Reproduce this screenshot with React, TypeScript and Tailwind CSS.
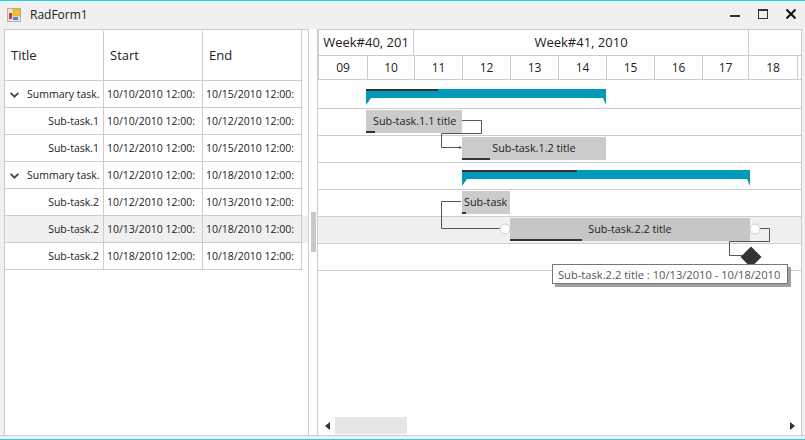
const line = "border-[#cccccc]";

interface TaskRow {
  title: string;
  start: string;
  end: string;
  summary?: boolean;
  selected?: boolean;
}

const rows: TaskRow[] = [
  { title: "Summary task.", start: "10/10/2010 12:00:", end: "10/15/2010 12:00:", summary: true },
  { title: "Sub-task.1", start: "10/10/2010 12:00:", end: "10/12/2010 12:00:" },
  { title: "Sub-task.1", start: "10/12/2010 12:00:", end: "10/15/2010 12:00:" },
  { title: "Summary task.", start: "10/12/2010 12:00:", end: "10/18/2010 12:00:", summary: true },
  { title: "Sub-task.2", start: "10/12/2010 12:00:", end: "10/13/2010 12:00:" },
  { title: "Sub-task.2", start: "10/13/2010 12:00:", end: "10/18/2010 12:00:", selected: true },
  { title: "Sub-task.2", start: "10/18/2010 12:00:", end: "10/18/2010 12:00:" },
];

const days = [
  { label: "09", width: 49 },
  { label: "10", width: 47 },
  { label: "11", width: 48 },
  { label: "12", width: 48 },
  { label: "13", width: 48 },
  { label: "14", width: 48 },
  { label: "15", width: 48 },
  { label: "16", width: 48 },
  { label: "17", width: 46 },
  { label: "18", width: 49 },
];

function FormIcon() {
  return (
    <svg width="14" height="14" viewBox="0 0 14 14">
      <rect x="0.5" y="0.5" width="13" height="13" fill="#e4e4e4" stroke="#b0b0b0" />
      <rect x="6" y="1" width="7" height="7" fill="#f5c02e" stroke="#c79a20" strokeWidth="0.5" />
      <rect x="2" y="5" width="3" height="6" fill="#d03a2a" />
      <rect x="6" y="9" width="5" height="3" fill="#4a86d8" />
    </svg>
  );
}

function WindowControls() {
  return (
    <div className="flex items-center gap-[18px] pr-[9px] pb-[2px]">
      <svg width="10" height="10" viewBox="0 0 10 10">
        <rect x="0" y="6" width="10" height="2" fill="#333333" />
      </svg>
      <svg width="10" height="10" viewBox="0 0 10 10">
        <rect x="0.5" y="0.5" width="9" height="9" fill="none" stroke="#333333" />
        <rect x="0" y="0" width="10" height="2" fill="#333333" />
      </svg>
      <svg width="10" height="10" viewBox="0 0 10 10">
        <path d="M0.5 0.5L9.5 9.5M9.5 0.5L0.5 9.5" stroke="#111111" strokeWidth="2" />
      </svg>
    </div>
  );
}

function Chevron() {
  return (
    <svg width="9" height="6" viewBox="0 0 9 6" className="shrink-0">
      <path d="M0.6 0.8L4.5 4.7L8.4 0.8" fill="none" stroke="#444444" strokeWidth="1.8" />
    </svg>
  );
}

function TaskGrid() {
  return (
    <div className="w-full">
      <div className={`flex h-[51px] w-[297px] border-r border-b ${line} pt-[1px] text-[13px] text-[#222222]`}>
        <div className={`flex w-[99px] items-center border-r ${line} pl-[6px]`}>Title</div>
        <div className={`flex w-[99px] items-center border-r ${line} pl-[6px]`}>Start</div>
        <div className="flex w-[98px] items-center pl-[6px]">End</div>
      </div>
      {rows.map((row, i) => (
        <div key={i} className={row.selected ? "bg-[#f0f0f0]" : ""}>
          <div className={`flex h-[27px] w-[297px] border-r border-b ${line} text-[10.5px] text-[#222222]`}>
            {row.summary ? (
              <div className={`flex w-[99px] items-center overflow-hidden border-r ${line} pt-[1px] pl-[5px] whitespace-nowrap`}>
                <Chevron />
                <span className="ml-[8px]">{row.title}</span>
              </div>
            ) : (
              <div className={`flex w-[99px] items-center justify-end border-r ${line} pt-[1px] pr-[4px]`}>{row.title}</div>
            )}
            <div className={`flex w-[99px] items-center overflow-hidden border-r ${line} pt-[1px] pl-[3px] whitespace-nowrap`}>
              {row.start}
            </div>
            <div className="flex w-[98px] items-center overflow-hidden pt-[1px] pl-[3px] whitespace-nowrap">{row.end}</div>
          </div>
        </div>
      ))}
    </div>
  );
}

function TimelineHeader() {
  return (
    <div className={`border-b border-l ${line} text-[13px] text-[#222222]`}>
      <div className={`flex h-[26px] border-b ${line}`}>
        <div className={`flex w-[95px] items-center justify-center overflow-hidden border-r ${line} whitespace-nowrap`}>
          Week#40, 201
        </div>
        <div className={`flex w-[335px] items-center justify-center border-r ${line}`}>Week#41, 2010</div>
      </div>
      <div className="flex h-[23px] text-[12px]">
        {days.map((d) => (
          <div
            key={d.label}
            style={{ width: d.width }}
            className={`flex items-center justify-center border-r ${line}`}
          >
            {d.label}
          </div>
        ))}
      </div>
    </div>
  );
}

function SummaryBar({ left, width, done, top }: { left: number; width: number; done: number; top: number }) {
  return (
    <div className="absolute h-[16px]" style={{ left, width, top }}>
      <div className="h-[9px] bg-[#009ab8]">
        <div className="h-[2px] bg-[#333333]" style={{ width: done }} />
      </div>
      <svg width="5" height="7" viewBox="0 0 5 7" className="absolute top-[9px] left-0">
        <path d="M0 0H5L0 7Z" fill="#009ab8" />
      </svg>
      <svg width="3" height="7" viewBox="0 0 3 7" className="absolute top-[9px] right-0">
        <path d="M0 0H3V7Z" fill="#009ab8" />
      </svg>
    </div>
  );
}

function TaskBar({
  left,
  width,
  done,
  label,
  labelClass,
  fill = "bg-[#cbcbcb]",
}: {
  left: number;
  width: number;
  done: number;
  label: string;
  labelClass: string;
  fill?: string;
}) {
  return (
    <div
      className={`absolute top-[1px] flex h-[23px] items-center overflow-hidden text-[10.8px] whitespace-nowrap text-[#222222] ${fill} ${labelClass}`}
      style={{ left, width }}
    >
      {label}
      <div className="absolute bottom-0 left-0 h-[2px] bg-[#333333]" style={{ width: done }} />
    </div>
  );
}

function Timeline() {
  return (
    <div className={`relative flex min-w-0 flex-1 flex-col border-r ${line} bg-white`}>
      <TimelineHeader />

      <div className={`relative h-[29px] border-b ${line}`}>
        <SummaryBar left={48} width={240} done={72} top={9} />
      </div>
      <div className={`relative h-[27px] border-b ${line}`}>
        <TaskBar left={48} width={96} done={9} label="Sub-task.1.1 title" labelClass="pl-[7px]" />
      </div>
      <div className={`relative h-[27px] border-b ${line}`}>
        <TaskBar left={144} width={144} done={28} label="Sub-task.1.2 title" labelClass="justify-center" />
      </div>
      <div className={`relative h-[27px] border-b ${line}`}>
        <SummaryBar left={144} width={288} done={115} top={7} />
      </div>
      <div className={`relative h-[27px] border-b ${line}`}>
        <TaskBar left={144} width={48} done={4} label="Sub-task" labelClass="pl-[2px]" />
      </div>
      <div className={`relative h-[27px] border-b ${line} bg-[#f0f0f0]`}>
        <TaskBar
          left={192}
          width={240}
          done={72}
          label="Sub-task.2.2 title"
          labelClass="justify-center"
          fill="bg-[#c6c6c6]"
        />
      </div>
      <div className={`h-[27px] border-b ${line}`} />

      {/* links, handles and milestone sit over the rows */}
      <svg width="484" height="250" viewBox="318 30 484 250" className="pointer-events-none absolute top-0 left-0">
        <g fill="none" stroke="#555555">
          <path d="M462 120.5H481.5V133.5H441.5V147.5H459" />
          <path d="M461 201.5H441.5V228.5H500" />
          <path d="M760 228.5H769.5V241.5H729.5V255.5H742" />
        </g>
        <path d="M459 146L462 147.5L459 149Z" fill="#555555" />
        <circle cx="505" cy="229" r="5" fill="#ffffff" stroke="#cccccc" />
        <circle cx="755" cy="229" r="5" fill="#ffffff" stroke="#cccccc" />
        <path d="M751 246.5L761.5 257L751 267.5L740.5 257Z" fill="#333333" />
      </svg>

      <div className="absolute top-[234px] left-[234px] w-[236px] border border-[#767676] bg-white px-[5px] pt-[2px] text-[11.15px] leading-[16px] whitespace-nowrap text-[#575757] shadow-[3px_3px_0_#a0a0a0]">
        Sub-task.2.2 title : 10/13/2010 - 10/18/2010
      </div>

      <div className="mt-auto mb-[1px] flex h-[17px] items-center">
        <svg width="5" height="8" viewBox="0 0 5 8" className="ml-[7px]">
          <path d="M5 0V8L0 4Z" fill="#333333" />
        </svg>
        <div className="ml-[5px] h-[17px] w-[72px] bg-[#e5e5e5]" />
        <svg width="5" height="8" viewBox="0 0 5 8" className="mr-[6px] ml-auto">
          <path d="M0 0V8L5 4Z" fill="#333333" />
        </svg>
      </div>
    </div>
  );
}

export default function App() {
  return (
    <div className="flex h-[440px] w-[805px] flex-col overflow-hidden bg-[#f0f0f0] font-['Open_Sans','Noto_Sans',sans-serif]">
      <div className="h-px bg-[#17d4f4]" />
      <div className="flex h-[28px] items-center justify-between pl-[7px]">
        <div className="flex items-center gap-[9px] text-[12px] text-[#222222]">
          <FormIcon />
          <span>RadForm1</span>
        </div>
        <WindowControls />
      </div>
      <div className={`flex min-h-0 flex-1 border-b ${line} pl-[4px]`}>
        <div className={`flex w-[305px] border-x border-t ${line} bg-white`}>
          <TaskGrid />
        </div>
        <div className="flex w-[8px] items-center justify-center bg-white">
          <div className="h-[40px] w-[5px] bg-[#c8c8c8]" />
        </div>
        <div className={`flex w-[485px] border-t border-l ${line} bg-white`}>
          <Timeline />
        </div>
      </div>
      <div className="h-[3px]" />
      <div className="h-px bg-[#17d4f4]" />
    </div>
  );
}
